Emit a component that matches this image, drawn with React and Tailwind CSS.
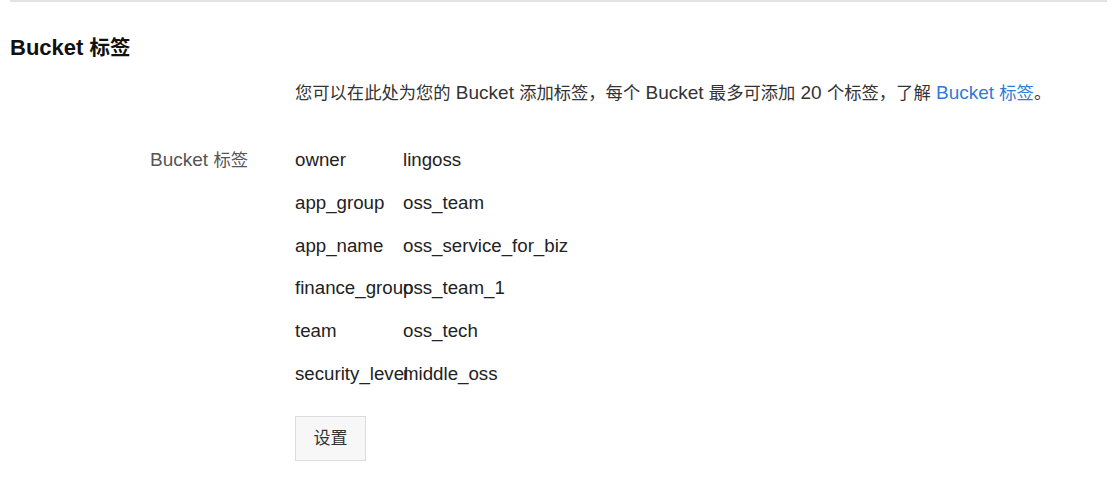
import React from "react";

const tags = [
  ["owner", "lingoss"],
  ["app_group", "oss_team"],
  ["app_name", "oss_service_for_biz"],
  ["finance_group", "oss_team_1"],
  ["team", "oss_tech"],
  ["security_level", "middle_oss"],
];

// Latin glyphs in the screenshot run wider than CJK ones, so size the runs separately
const Mixed = ({ text, latin, cjk }) => {
  const parts = text.split(/([\u3000-\u303f\u4e00-\u9fff\uff00-\uffef]+)/).filter(Boolean);
  return parts.map((p, i) =>
    /[\u3000-\u303f\u4e00-\u9fff\uff00-\uffef]/.test(p) ? (
      <span key={i} className={cjk}>{p}</span>
    ) : (
      <span key={i} className={latin}>{p}</span>
    )
  );
};

const App = () => {
  return (
    <div
      className="w-[1117px] h-[500px] bg-white text-[#333] px-[10px]"
      style={{ fontFamily: '"Liberation Sans", "Noto Sans CJK SC", sans-serif' }}
    >
      <div className="h-[2px] bg-[#e2e2e2]" />

      <h2 className="mt-[33px] leading-[26px] font-bold text-[#111]">
        <Mixed text="Bucket 标签" latin="text-[22px]" cjk="text-[20.5px]" />
      </h2>

      <div className="flex mt-[18px]">
        <div className="w-[285px] shrink-0" />
        <p className="leading-[24px]">
          <Mixed
            text="您可以在此处为您的 Bucket 添加标签，每个 Bucket 最多可添加 20 个标签，了解 "
            latin="text-[19px]"
            cjk="text-[17.3px]"
          />
          <a className="text-[#2f7bd7]" href="#">
            <Mixed text="Bucket 标签" latin="text-[19px]" cjk="text-[17.3px]" />
          </a>
          <span className="text-[17.3px]">。</span>
        </p>
      </div>

      {/* tag list */}
      <div className="flex mt-[42px]">
        <div className="w-[285px] shrink-0 pl-[140px] leading-[24px] text-[#555]">
          <Mixed text="Bucket 标签" latin="text-[19px]" cjk="text-[17.3px]" />
        </div>
        <div className="flex-1">
          <div className="flex flex-col gap-[18.8px]">
            {tags.map(([k, v]) => (
              <div key={k} className="flex text-[18.7px] leading-[24px] text-[#222]">
                <div className="w-[108px] shrink-0 whitespace-nowrap overflow-visible">{k}</div>
                <div className="whitespace-nowrap">{v}</div>
              </div>
            ))}
          </div>
          <button className="mt-[30px] w-[71px] h-[45px] bg-[#f7f7f7] border border-[#dcdcdc] text-[17px] text-[#333]">
            设置
          </button>
        </div>
      </div>
    </div>
  );
};

export default App;
